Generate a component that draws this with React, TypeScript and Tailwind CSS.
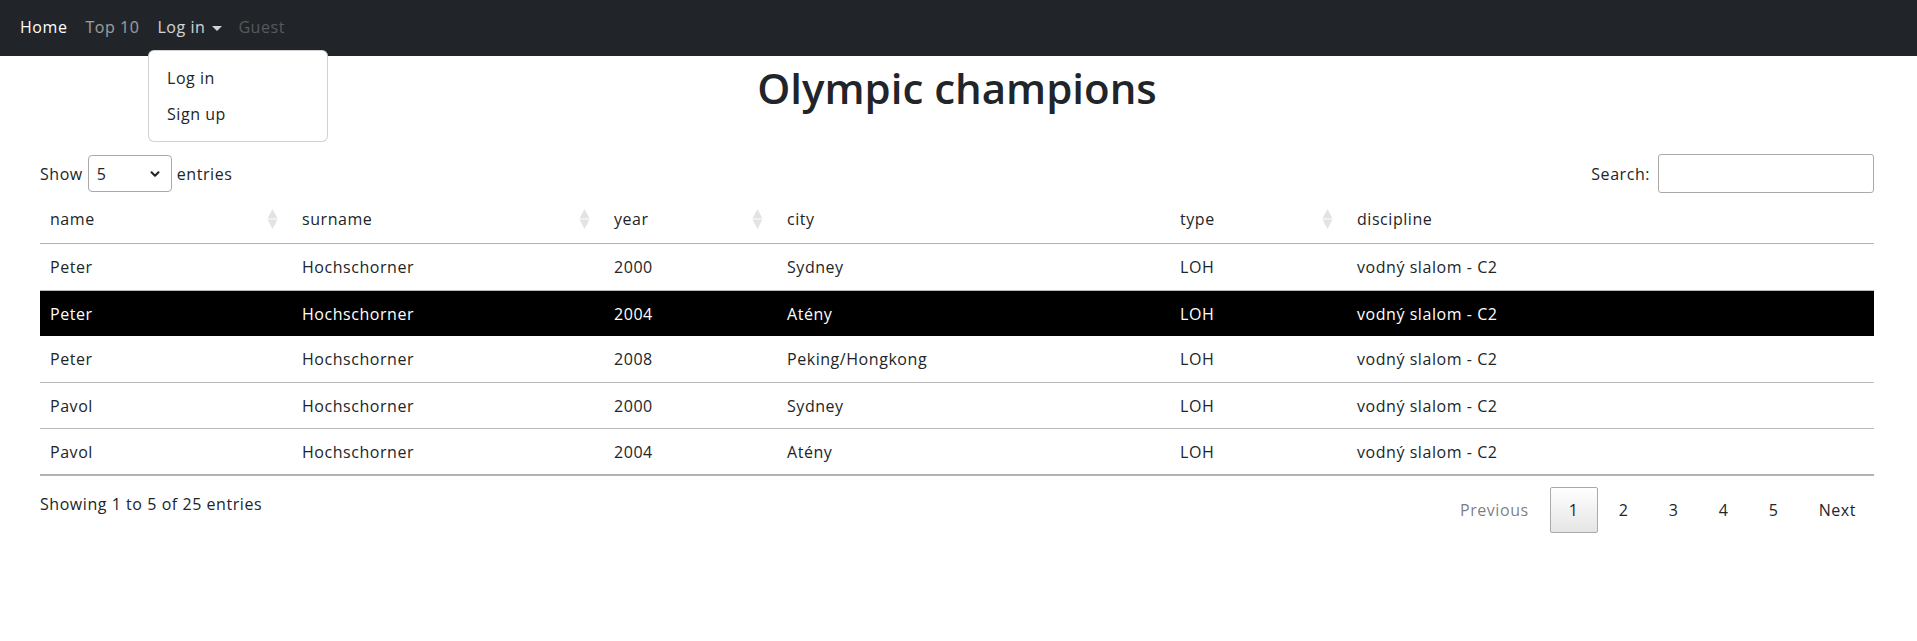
import { ChevronDown } from "lucide-react";

const COLS = [
  { label: "name", w: "w-[252px]", sort: true },
  { label: "surname", w: "w-[312px]", sort: true },
  { label: "year", w: "w-[173px]", sort: true },
  { label: "city", w: "w-[393px]", sort: false },
  { label: "type", w: "w-[177px]", sort: true },
  { label: "discipline", w: "", sort: false },
];

const ROWS = [
  ["Peter", "Hochschorner", "2000", "Sydney", "LOH", "vodný slalom - C2"],
  ["Peter", "Hochschorner", "2004", "Atény", "LOH", "vodný slalom - C2"],
  ["Peter", "Hochschorner", "2008", "Peking/Hongkong", "LOH", "vodný slalom - C2"],
  ["Pavol", "Hochschorner", "2000", "Sydney", "LOH", "vodný slalom - C2"],
  ["Pavol", "Hochschorner", "2004", "Atény", "LOH", "vodný slalom - C2"],
];

function SortIcon() {
  return (
    <svg width="11" height="20" viewBox="0 0 11 20" className="shrink-0">
      <path d="M5.5 0 L10.5 9.6 L0.5 9.6 Z" fill="#e3e3e3" />
      <path d="M0.5 10.4 L10.5 10.4 L5.5 20 Z" fill="#e3e3e3" />
    </svg>
  );
}

export default function App() {
  return (
    <div className="min-h-screen bg-white text-[#212529] text-base tracking-[0.55px] font-['Open_Sans',sans-serif] relative">
      {/* Navbar */}
      <nav className="h-14 bg-[#212529] flex items-center px-[11px] pb-[2px]">
        <a className="px-[9px] text-white">Home</a>
        <a className="px-[9px] text-white/55">Top 10</a>
        <a className="pl-[9px] pr-[7px] text-white/80 flex items-center">
          Log in
          <span className="ml-[7px] mt-[2px] w-0 h-0 border-x-[5px] border-x-transparent border-t-[5px] border-t-white/80" />
        </a>
        <a className="px-[9px] text-white/25">Guest</a>
      </nav>

      {/* Dropdown */}
      <div className="absolute left-[148px] top-[50px] w-[180px] h-[92px] z-10 bg-white border border-black/[.175] rounded-md py-[9px]">
        <div className="h-9 flex items-center pl-[18px]">Log in</div>
        <div className="h-9 flex items-center pl-[18px]">Sign up</div>
      </div>

      <main className="ml-10 mr-[43px]">
        <h1 className="text-center text-[42px] font-semibold tracking-normal leading-[53px] mt-[5px] mb-[40px]">
          Olympic champions
        </h1>

        {/* Controls */}
        <div className="flex justify-between items-center h-[39px]">
          <div className="flex items-center gap-[5px]">
            <span>Show</span>
            <div className="relative w-[84px] h-[37px] border border-[#aaa] rounded-[4px] flex items-center pl-[8px]">
              <span>5</span>
              <ChevronDown className="absolute right-[9px] size-[14px]" strokeWidth={3.5} />
            </div>
            <span>entries</span>
          </div>
          <div className="flex items-center gap-[8px]">
            <span>Search:</span>
            <div className="w-[216px] h-[39px] border border-[#aaa] rounded-[3px]" />
          </div>
        </div>

        {/* Table */}
        <table className="w-full mt-[2px] table-fixed border-separate border-spacing-0">
          <colgroup>
            {COLS.map((c) => (
              <col key={c.label} className={c.w} />
            ))}
          </colgroup>
          <thead>
            <tr>
              {COLS.map((c) => (
                <th key={c.label} className="h-[49px] p-0 font-normal text-left border-b border-[#b3b3b3]">
                  <div className="flex items-center justify-between pl-[10px] pr-[14px]">
                    <span>{c.label}</span>
                    {c.sort && <SortIcon />}
                  </div>
                </th>
              ))}
            </tr>
          </thead>
          <tbody>
            {ROWS.map((r, i) => {
              const selected = i === 1;
              const bordered = i === 1 || i === 3 || i === 4;
              const last = i === ROWS.length - 1;
              return (
                <tr key={i} className={selected ? "bg-black text-white" : ""}>
                  {r.map((v, j) => (
                    <td
                      key={j}
                      className={`px-[10px] py-0 ${last ? "h-[48px] border-b-2 border-b-[#b3b3b3]" : "h-[46px]"} ${bordered ? "border-t border-t-[#b9b9b9]" : ""}`}
                    >
                      {v}
                    </td>
                  ))}
                </tr>
              );
            })}
          </tbody>
        </table>

        {/* Footer */}
        <div className="flex justify-between items-start mt-[11px]">
          <div className="pt-[5px]">Showing 1 to 5 of 25 entries</div>
          <div className="flex items-center gap-[2px]">
            <span className="h-[46px] px-[19px] flex items-center text-[#212529]/60">Previous</span>
            <span className="h-[46px] w-12 flex items-center justify-center border border-[#aaa] rounded-[2px] bg-gradient-to-b from-white to-[#e5e5e5]">1</span>
            <span className="h-[46px] w-12 flex items-center justify-center">2</span>
            <span className="h-[46px] w-12 flex items-center justify-center">3</span>
            <span className="h-[46px] w-12 flex items-center justify-center">4</span>
            <span className="h-[46px] w-12 flex items-center justify-center">5</span>
            <span className="h-[46px] pl-[19px] pr-[18px] flex items-center">Next</span>
          </div>
        </div>
      </main>
    </div>
  );
}
